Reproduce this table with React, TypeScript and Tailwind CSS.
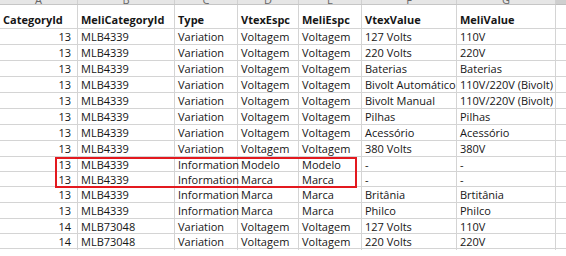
import React from 'react';

type Row = [string, string, string, string, string, string, string];

const rows: Row[] = [
    ['13', 'MLB4339', 'Variation', 'Voltagem', 'Voltagem', '127 Volts', '110V'],
    ['13', 'MLB4339', 'Variation', 'Voltagem', 'Voltagem', '220 Volts', '220V'],
    ['13', 'MLB4339', 'Variation', 'Voltagem', 'Voltagem', 'Baterias', 'Baterias'],
    ['13', 'MLB4339', 'Variation', 'Voltagem', 'Voltagem', 'Bivolt Automático', '110V/220V (Bivolt)'],
    ['13', 'MLB4339', 'Variation', 'Voltagem', 'Voltagem', 'Bivolt Manual', '110V/220V (Bivolt)'],
    ['13', 'MLB4339', 'Variation', 'Voltagem', 'Voltagem', 'Pilhas', 'Pilhas'],
    ['13', 'MLB4339', 'Variation', 'Voltagem', 'Voltagem', 'Acessório', 'Acessório'],
    ['13', 'MLB4339', 'Variation', 'Voltagem', 'Voltagem', '380 Volts', '380V'],
    ['13', 'MLB4339', 'Information', 'Modelo', 'Modelo', '-', '-'],
    ['13', 'MLB4339', 'Information', 'Marca', 'Marca', '-', '-'],
    ['13', 'MLB4339', 'Information', 'Marca', 'Marca', 'Britânia', 'Brtitânia'],
    ['13', 'MLB4339', 'Information', 'Marca', 'Marca', 'Philco', 'Philco'],
    ['14', 'MLB73048', 'Variation', 'Voltagem', 'Voltagem', '127 Volts', '110V'],
    ['14', 'MLB73048', 'Variation', 'Voltagem', 'Voltagem', '220 Volts', '220V'],
];

const headers = ['CategoryId', 'MeliCategoryId', 'Type', 'VtexEspc', 'MeliEspc', 'VtexValue', 'MeliValue'];
const letters = ['A', 'B', 'C', 'D', 'E', 'F', 'G'];
const heights = ['h-[16px]', 'h-[16px]', 'h-[16px]', 'h-[16px]', 'h-[16px]', 'h-[16px]', 'h-[16px]', 'h-[16px]', 'h-[15px]', 'h-[15px]', 'h-[16px]', 'h-[16px]', 'h-[15px]', 'h-[15px]'];

const cols = 'grid grid-cols-[78px_97px_63px_61px_63px_95px_99px]';

function App() {
    return (
        <div className="relative w-[566px] h-[256px] bg-white overflow-hidden text-[#161616] text-[11px]" style={{ fontFamily: '"Open Sans", sans-serif' }}>
            {/* column letters, cut at the top */}
            <div className="flex">
                <div className={cols + ' h-[5px] bg-[#e6e6e6] border-b border-[#c6c6c6]'}>
                    {letters.map((l) => (
                        <div key={l} className="flex justify-center items-end overflow-hidden border-r border-[#d0d0d0] text-[#666]">
                            <span className="leading-[12px] mb-[-2px]">{l}</span>
                        </div>
                    ))}
                </div>
                <div className="w-[11px] h-[5px] bg-[#cfcfcf] border-b border-[#bdbdbd]" />
            </div>

            <div className={cols + ' h-[24px] border-b border-[#d4d4d4]'}>
                {headers.map((h) => (
                    <div key={h} className="flex items-end pb-[1px] pl-[3px] border-r border-[#d4d4d4] font-bold leading-[15px] whitespace-nowrap">
                        {h}
                    </div>
                ))}
            </div>

            {rows.map((r, i) => (
                <div key={i} className={cols + ' ' + heights[i] + ' border-b border-[#d4d4d4]'}>
                    {r.map((c, j) => (
                        <div
                            key={j}
                            className={
                                'flex items-end pb-[1px] border-r border-[#d4d4d4] leading-[15px] whitespace-nowrap ' +
                                (j === 0 ? 'justify-end pr-[6px]' : 'pl-[3px]')
                            }
                        >
                            {c}
                        </div>
                    ))}
                </div>
            ))}

            {/* red highlight box */}
            <div className="absolute left-[55px] top-[157px] w-[302px] h-[31px] border-[2.5px] border-[#e3191f]" />
        </div>
    );
}

export default App;
